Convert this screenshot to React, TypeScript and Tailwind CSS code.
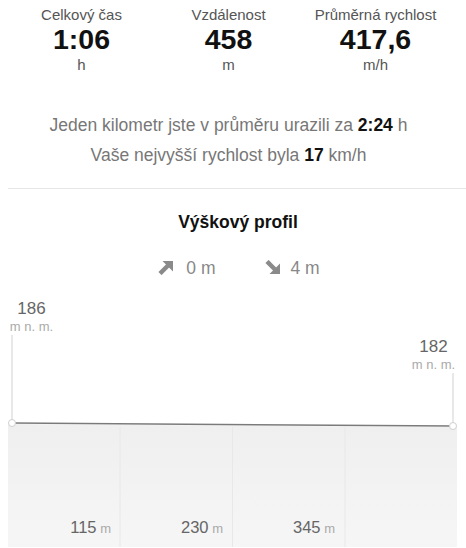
import React from "react";

function ArrowUpRight() {
  return (
    <svg width="16" height="15" viewBox="0 0 16 15" className="block">
      <line x1="2" y1="13.5" x2="10" y2="5.5" stroke="#8a8a8a" strokeWidth="4.5" strokeLinecap="butt" />
      <polygon points="4.5,1 15,1 15,11.5" fill="#8a8a8a" />
    </svg>
  );
}

function ArrowDownRight() {
  return (
    <svg width="16" height="15" viewBox="0 0 16 15" className="block">
      <line x1="2" y1="1.5" x2="10" y2="9.5" stroke="#8a8a8a" strokeWidth="4.5" strokeLinecap="butt" />
      <polygon points="4.5,14 15,14 15,3.5" fill="#8a8a8a" />
    </svg>
  );
}

function Stat({ label, value, unit }: { label: string; value: string; unit: string }) {
  return (
    <div className="flex flex-col items-center">
      <div className="text-[15px] leading-[18px] text-[#555]">{label}</div>
      <div className="text-[28.5px] leading-[30px] font-bold text-[#111]">{value}</div>
      <div className="mt-[2px] text-[15px] leading-[18px] text-[#555]">{unit}</div>
    </div>
  );
}

export default function App() {
  const grid = [112, 224.5, 337];
  const dist = [
    { v: "115", r: 103 },
    { v: "230", r: 215 },
    { v: "345", r: 327 },
  ];
  return (
    <div
      className="w-[466px] h-[548px] overflow-hidden bg-white"
      style={{ fontFamily: '"Liberation Sans", Arial, sans-serif' }}
    >
      <div className="ml-2 w-[441px] pt-[6px] grid grid-cols-3">
        <Stat label="Celkový čas" value="1:06" unit="h" />
        <Stat label="Vzdálenost" value="458" unit="m" />
        <Stat label="Průměrná rychlost" value="417,6" unit="m/h" />
      </div>

      <div className="ml-2 w-[441px] mt-[36px] text-center text-[17.5px] leading-[30px] text-[#777]">
        <div>
          Jeden kilometr jste v průměru urazili za <b className="text-[#111]">2:24</b> h
        </div>
        <div>
          Vaše nejvyšší rychlost byla <b className="text-[#111]">17</b> km/h
        </div>
      </div>

      <div className="ml-2 mt-[18px] h-px bg-[#e6e6e6]" />

      <div className="ml-2 w-[460px] mt-[21px] text-center text-[17.5px] leading-[24px] font-bold text-[#111]">
        Výškový profil
      </div>

      <div className="ml-2 w-[462px] mt-[21.5px] flex justify-center gap-[49px] text-[17.5px] leading-[24px] text-[#888]">
        <div className="flex items-center gap-[12px]">
          <ArrowUpRight />
          <span>0 m</span>
        </div>
        <div className="flex items-center gap-[10px]">
          <ArrowDownRight />
          <span>4 m</span>
        </div>
      </div>

      <div className="relative ml-2 mt-[10.5px] w-[449px] h-[258px]">
        <svg width="449" height="258" className="absolute left-0 top-0">
          <defs>
            <linearGradient id="area" x1="0" y1="0" x2="0" y2="1">
              <stop offset="0" stopColor="#efefef" />
              <stop offset="1" stopColor="#f6f6f6" />
            </linearGradient>
          </defs>
          <polygon points="0,134 449,137 449,257 0,257" fill="url(#area)" />
          {grid.map((x) => (
            <line key={x} x1={x} y1={137} x2={x} y2={257} stroke="#e8e8e8" strokeWidth="1" />
          ))}
          <line x1="4" y1="45" x2="4" y2="133" stroke="#e0e0e0" strokeWidth="1.5" />
          <line x1="445" y1="83" x2="445" y2="136" stroke="#e0e0e0" strokeWidth="1.5" />
          <line x1="4" y1="133" x2="445" y2="136" stroke="#7a7a7a" strokeWidth="1.5" />
          <circle cx="4" cy="133" r="3.5" fill="#fff" stroke="#cfcfcf" strokeWidth="1" />
          <circle cx="445" cy="136" r="3.5" fill="#fff" stroke="#cfcfcf" strokeWidth="1" />
        </svg>

        <div className="absolute left-[3px] top-[9px] w-[41px] flex flex-col items-center whitespace-nowrap">
          <div className="text-[17px] leading-[20px] text-[#666]">186</div>
          <div className="text-[13px] leading-[14px] text-[#aaa] mt-[1px]">m n. m.</div>
        </div>
        <div className="absolute left-[405px] top-[47px] w-[41px] flex flex-col items-center whitespace-nowrap">
          <div className="text-[17px] leading-[20px] text-[#666]">182</div>
          <div className="text-[13px] leading-[14px] text-[#aaa] mt-[1px]">m n. m.</div>
        </div>

        {dist.map((d) => (
          <div
            key={d.v}
            className="absolute top-[227px] w-[80px] text-right leading-[20px] whitespace-nowrap"
            style={{ left: d.r - 80 }}
          >
            <span className="text-[16.5px] text-[#666]">{d.v}</span>
            <span className="text-[13px] text-[#aaa]"> m</span>
          </div>
        ))}
      </div>
    </div>
  );
}
